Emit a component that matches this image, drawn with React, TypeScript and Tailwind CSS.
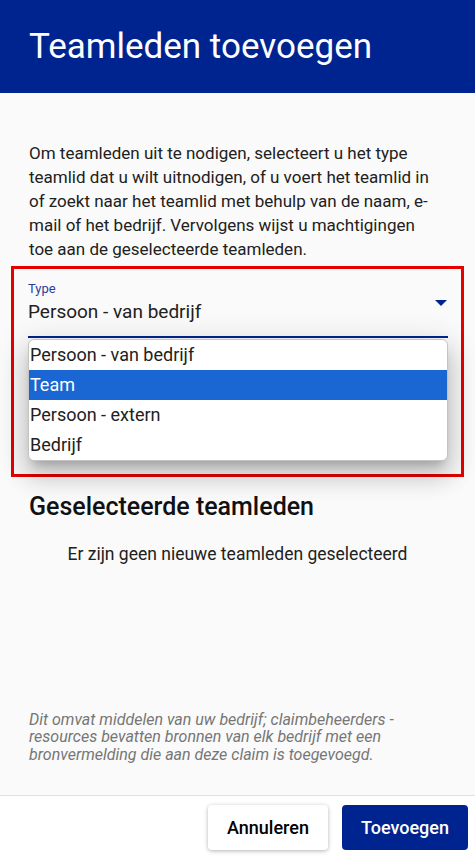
import { useState } from 'react';

const options = ['Persoon - van bedrijf', 'Team', 'Persoon - extern', 'Bedrijf'];

const App = () => {
  const [active] = useState('Team');

  return (
    <div className="flex h-[859px] w-[475px] flex-col bg-[#fafafa] font-['Roboto',sans-serif] text-[#212121]">
      <header className="flex h-[93px] shrink-0 items-center bg-[#00248f] px-[29px]">
        <h1 className="text-[35px] leading-none text-white">Teamleden toevoegen</h1>
      </header>

      <main className="flex flex-1 flex-col pt-[48px]">
        <p className="pl-[29px] pr-[35px] text-[17px] leading-[24px]">
          Om teamleden uit te nodigen, selecteert u het type teamlid dat u wilt uitnodigen, of u voert het teamlid in
          of zoekt naar het teamlid met behulp van de naam, e-mail of het bedrijf. Vervolgens wijst u machtigingen
          toe aan de geselecteerde teamleden.
        </p>

        <div className="mx-[11px] mt-[5px] border-[3px] border-[#e60000] pb-[136px] pl-[14px] pr-[13px] pt-[12px]">
          <div className="relative">
            <div className="relative border-b-2 border-[#00248f] pb-[12px]">
              <div className="text-[13px] leading-[16px] text-[#2a3d9c]">Type</div>
              <div className="mt-[3px] text-[19px] leading-[24px]">Persoon - van bedrijf</div>
              <svg width="12" height="6" viewBox="0 0 12 6" className="absolute right-[1px] top-[19px]">
                <path d="M0 0h12L6 6z" fill="#00248f" />
              </svg>
            </div>
            <ul className="absolute left-0 right-0 top-[calc(100%+1px)] overflow-hidden rounded-md border border-[#c4c4c4] bg-white shadow-[0_8px_10px_-5px_rgba(0,0,0,0.2),0_16px_24px_2px_rgba(0,0,0,0.14),0_6px_30px_5px_rgba(0,0,0,0.12)]">
              {options.map((opt) => (
                <li
                  key={opt}
                  className={
                    opt === active
                      ? 'h-[30px] bg-[#1a66d2] pl-[1px] text-[18px] leading-[30px] text-white'
                      : 'h-[30px] pl-[1px] text-[18px] leading-[30px] text-[#212121]'
                  }
                >
                  {opt}
                </li>
              ))}
            </ul>
          </div>
        </div>

        <h2 className="mt-[16px] px-[29px] text-[25px] font-medium leading-[28px] text-[#111]">Geselecteerde teamleden</h2>
        <p className="mt-[21px] text-center text-[17.5px] leading-[24px]">Er zijn geen nieuwe teamleden geselecteerd</p>

        <p className="mt-auto pl-[29px] pr-[80px] pb-[32px] text-[16px] italic leading-[17.5px] text-[#767676]">
          Dit omvat middelen van uw bedrijf; claimbeheerders - resources bevatten bronnen van elk bedrijf met een
          bronvermelding die aan deze claim is toegevoegd.
        </p>
      </main>

      <footer className="flex h-[64px] shrink-0 items-center justify-end gap-[14px] border-t border-[#e0e0e0] bg-white pr-[7px]">
        <button className="h-[45px] w-[120px] rounded-[4px] bg-white text-[18px] font-medium text-black shadow-[0_1px_4px_rgba(0,0,0,0.3)]">
          Annuleren
        </button>
        <button className="h-[45px] w-[126px] rounded-[4px] bg-[#00248f] text-[18px] font-medium text-white">
          Toevoegen
        </button>
      </footer>
    </div>
  );
};

export default App;
